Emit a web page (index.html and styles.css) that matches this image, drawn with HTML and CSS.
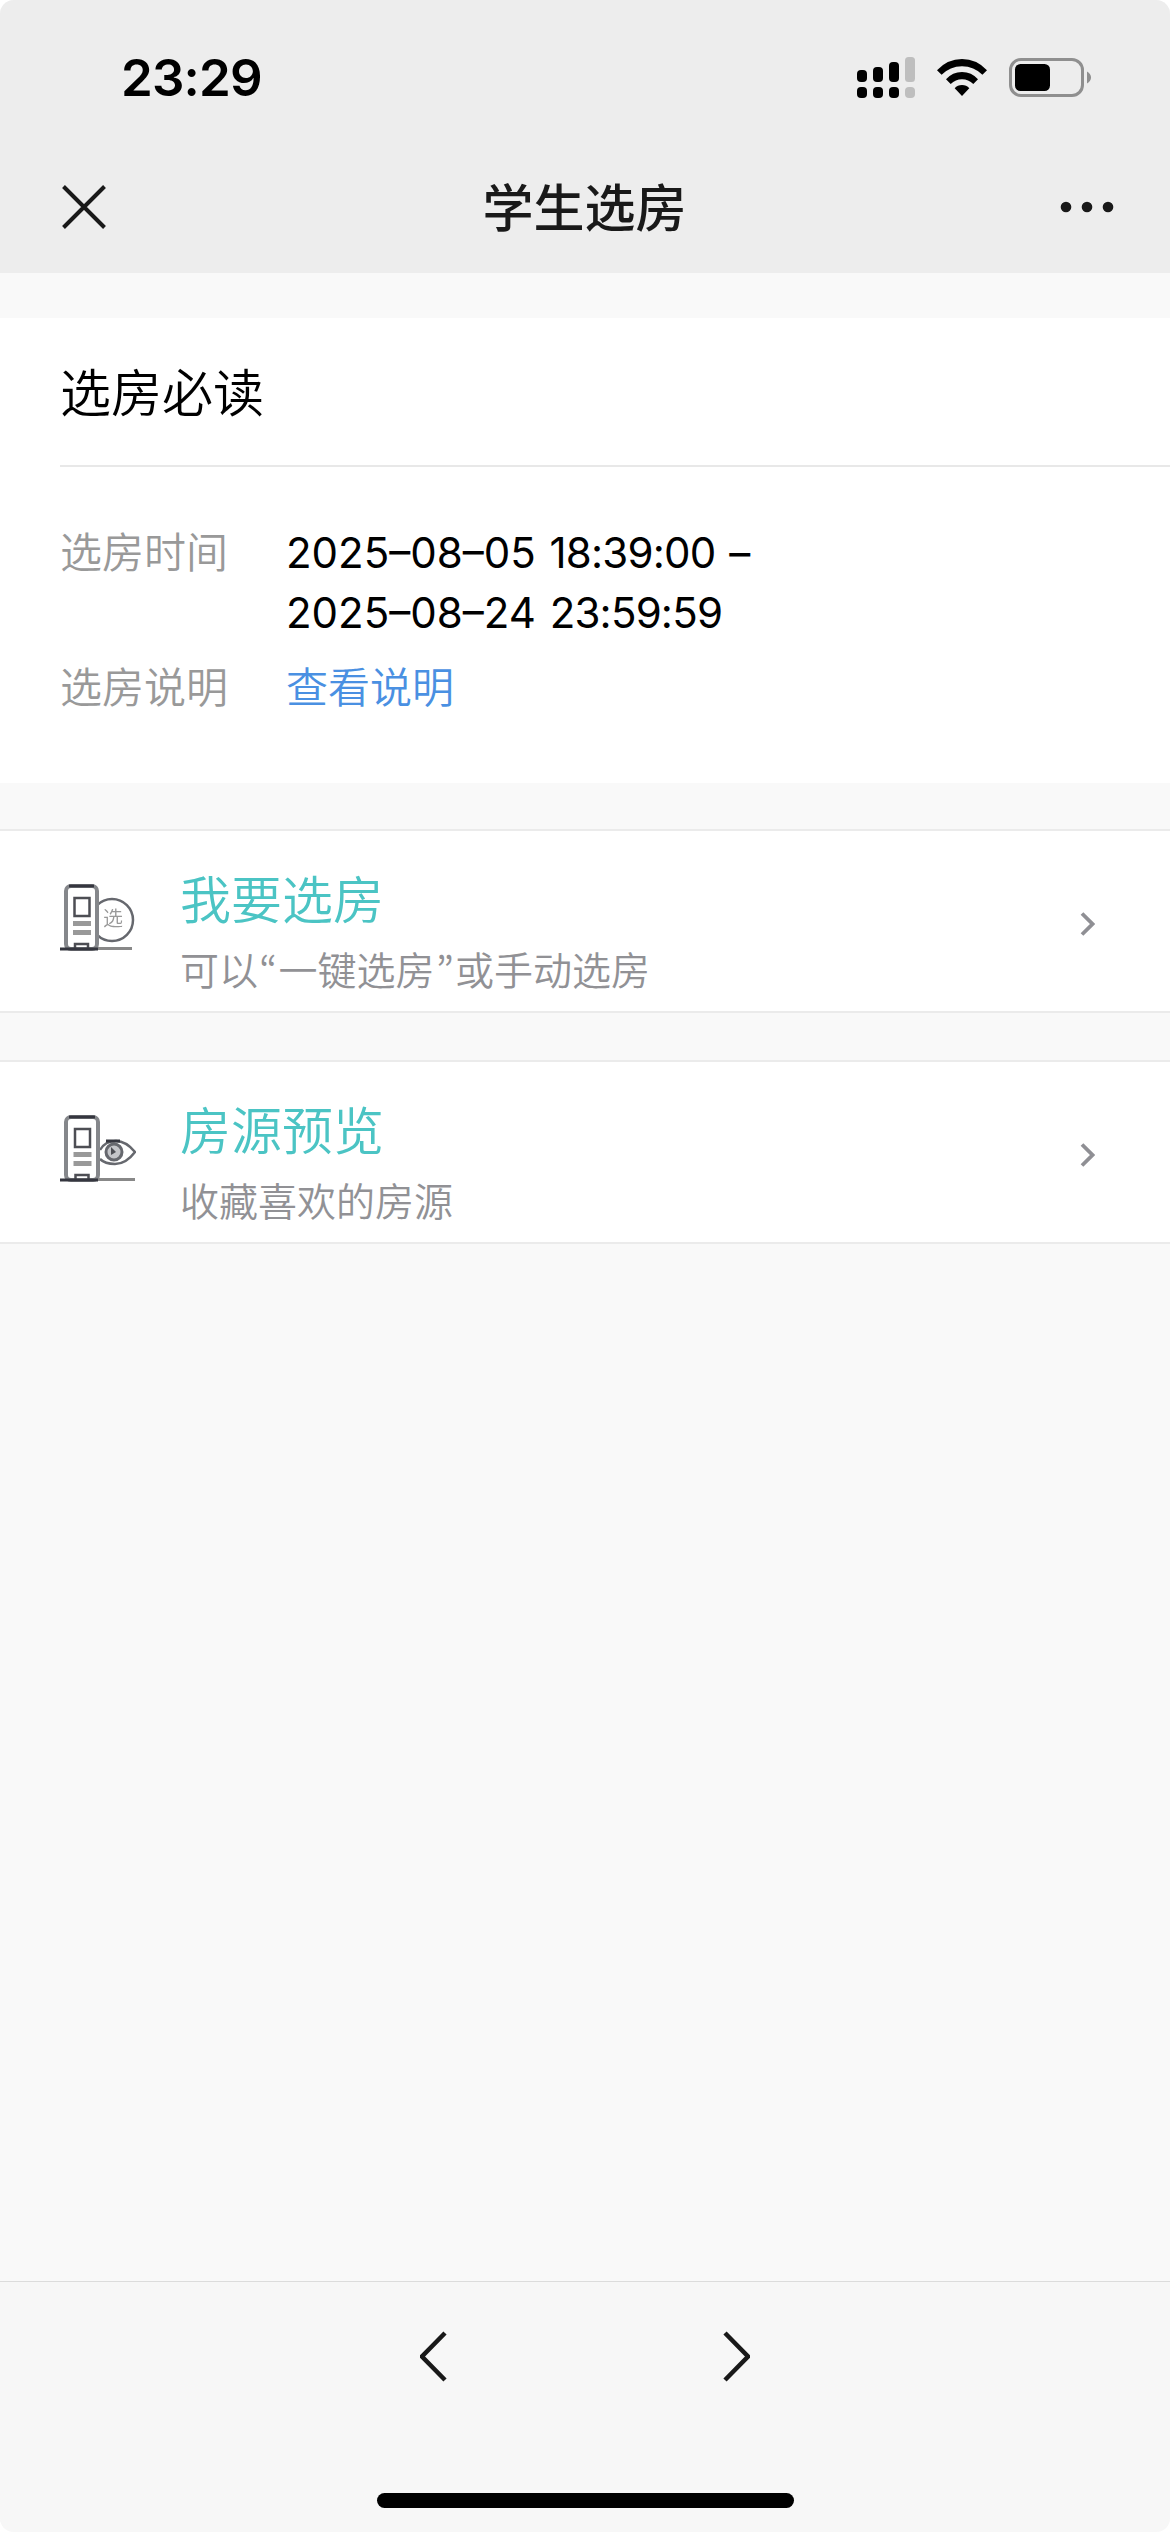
FILE: index.html
```html
<!DOCTYPE html>
<html lang="zh-CN">
<head>
<meta charset="utf-8">
<title>学生选房</title>
<link rel="stylesheet" href="styles.css">
</head>
<body>
<div class="screen">
  <header class="header">
    <div class="status">
      <span class="clock">23:29</span>
      <div class="status-icons">
        <svg class="signal" width="58" height="41" viewBox="0 0 58 41">
          <rect x="0" y="13" width="10" height="12" rx="4"/>
          <rect x="16" y="10" width="10" height="15" rx="4"/>
          <rect x="32" y="5" width="10" height="20" rx="4"/>
          <rect class="off" x="48" y="0" width="10" height="25" rx="3.5"/>
          <rect x="0" y="30" width="10" height="11" rx="4"/>
          <rect x="16" y="30" width="10" height="11" rx="4"/>
          <rect x="32" y="30" width="10" height="11" rx="4"/>
          <rect class="off" x="48" y="30" width="10" height="11" rx="4"/>
        </svg>
        <svg class="wifi" width="50" height="37" viewBox="0 0 50 37">
          <path d="M0 11.2Q10.5 0 25 0T50 11.2L45.4 15.8Q37 7.2 25 7.2T4.600 15.800Z"/>
          <path d="M9 20.300Q15.500 13 25 13T41 20.300L36.300 25Q31.500 20.200 25 20.200T13.700 25Z"/>
          <path d="M17.700 29.300Q20.500 26 25 26T32.300 29.300L25 37Z"/>
        </svg>
        <svg class="battery" width="83" height="39" viewBox="0 0 83 39">
          <rect class="case" x="1.500" y="1.500" width="72" height="36" rx="10.500"/>
          <rect x="6" y="6" width="35" height="27" rx="5.500"/>
          <path class="nub" d="M78 13.500Q82 16 82 19.500T78 25.500Z"/>
        </svg>
      </div>
    </div>
    <nav class="navbar">
      <svg class="close" width="44" height="44" viewBox="0 0 44 44"><path d="M1.500 1.500L42.500 42.500M42.500 1.500L1.500 42.500"/></svg>
      <h1 class="title">学生选房</h1>
      <svg class="more" width="54" height="12" viewBox="0 0 54 12"><circle cx="6" cy="6" r="5.300"/><circle cx="27" cy="6" r="5.300"/><circle cx="48" cy="6" r="5.300"/></svg>
    </nav>
  </header>

  <main class="content">
    <section class="notice">
      <h2 class="notice-title">选房必读</h2>
      <dl class="details">
        <dt>选房时间</dt>
        <dd class="period">2025–08–05 <span class="time">18:39:00</span> –<br>2025–08–24 <span class="time">23:59:59</span></dd>
        <dt>选房说明</dt>
        <dd><a class="link">查看说明</a></dd>
      </dl>
    </section>

    <a class="entry">
      <svg class="entry-icon" width="76" height="68" viewBox="0 0 76 68">
        <circle class="ring" cx="52" cy="36" r="21"/>
        <rect class="tower" x="6" y="2" width="31" height="63" rx="5"/>
        <path class="dark" d="M9 2H34"/>
        <rect class="window" x="14.500" y="14" width="15" height="18"/>
        <path class="bars" d="M13 39.500H31M13 48.500H31"/>
        <path class="door" d="M15 65V60H28V65"/>
        <path class="ground" d="M38 64.500H72"/>
        <path class="dark" d="M0 65H38"/>
        <text class="seal" x="43" y="42">选</text>
      </svg>
      <span class="entry-text">
        <span class="entry-name">我要选房</span>
        <span class="entry-desc">可以<span class="quote">“</span>一键选房<span class="quote">”</span>或手动选房</span>
      </span>
      <svg class="arrow" width="15" height="24" viewBox="0 0 15 24"><path d="M2 1.500L12.500 12L2 22.500"/></svg>
    </a>

    <a class="entry">
      <svg class="entry-icon" width="76" height="68" viewBox="0 0 76 68">
        <path class="eye" d="M40 35Q45 26 56 26Q66 26 75 37Q66 49 55 49Q45 49 40 44"/>
        <circle class="iris" cx="54" cy="37" r="8"/>
        <path class="pupil" d="M51 32L56 37L51 40Z"/>
        <path class="dark" d="M46 26H60"/>
        <rect class="tower" x="6" y="2" width="32" height="63" rx="5"/>
        <path class="dark" d="M9 2H35"/>
        <rect class="window" x="15" y="14" width="15" height="18"/>
        <path class="bars" d="M13.500 39.500H31.500M13.500 48.500H31.500"/>
        <path class="door" d="M15.500 65V60H28.500V65"/>
        <path class="ground" d="M38 64.500H75"/>
        <path class="dark" d="M0 65H38"/>
      </svg>
      <span class="entry-text">
        <span class="entry-name">房源预览</span>
        <span class="entry-desc">收藏喜欢的房源</span>
      </span>
      <svg class="arrow" width="15" height="24" viewBox="0 0 15 24"><path d="M2 1.500L12.500 12L2 22.500"/></svg>
    </a>
  </main>

  <footer class="toolbar">
    <div class="history">
      <svg width="27" height="51" viewBox="0 0 27 51"><path d="M25 2L2 25.500L25 49"/></svg>
      <svg width="27" height="51" viewBox="0 0 27 51"><path d="M2 2L25 25.500L2 49"/></svg>
    </div>
    <div class="home"></div>
  </footer>
</div>
</body>
</html>
```

FILE: styles.css
```css
* {
  box-sizing: border-box;
  margin: 0;
  padding: 0;
}

body {
  background: #fff;
  font-family: Inter, "Noto Sans CJK SC", sans-serif;
  font-weight: 350;
  color: #000;
}

svg {
  display: block;
  flex: none;
}

.screen {
  display: flex;
  flex-direction: column;
  width: 1170px;
  height: 2532px;
  border-radius: 14px;
  overflow: hidden;
  background: #f9f9f9;
}

.header {
  height: 273px;
  background: #ededed;
}

.status {
  display: flex;
  justify-content: space-between;
  align-items: center;
  height: 141px;
  padding: 14px 78px 0 121px;
}

.clock {
  font-size: 51px;
  font-weight: 600;
  line-height: 60px;
  letter-spacing: -0.8px;
}

.status-icons {
  display: flex;
  align-items: center;
  gap: 22px;
}

.off {
  fill: #bebebe;
}

.case {
  fill: none;
  stroke: #8f8f8f;
  stroke-width: 3;
}

.nub {
  fill: #8f8f8f;
}

.navbar {
  display: flex;
  justify-content: space-between;
  align-items: center;
  height: 132px;
  padding: 0 56px 0 62px;
}

.close path {
  stroke: #191919;
  stroke-width: 4;
}

.title {
  padding: 3px 0 0 3px;
  font-size: 51px;
  font-weight: 500;
  line-height: 60px;
  color: #191919;
}

.more {
  fill: #191919;
}

.content {
  flex: 1;
  padding-top: 45px;
}

.notice {
  height: 465px;
  margin-bottom: 46px;
  padding-left: 60px;
  background: #fff;
}

.notice-title {
  height: 149px;
  border-bottom: 2px solid #e8e8e8;
  font-size: 51px;
  font-weight: 350;
  line-height: 152px;
}

.details {
  display: grid;
  grid-template-columns: 226px 1fr;
  row-gap: 15px;
  padding-top: 56px;
  font-size: 42px;
  line-height: 60px;
}

.details dt {
  color: #999;
}

.period {
  font-weight: 400;
  word-spacing: 2px;
}

.time {
  letter-spacing: -0.8px;
}

.link {
  color: #4a90e2;
}

.entry {
  display: flex;
  align-items: center;
  height: 184px;
  margin-bottom: 47px;
  padding: 0 75px 0 60px;
  border: solid #ebebeb;
  border-width: 2px 0;
  background: #fff;
}

.entry-icon {
  width: 76px;
  height: 68px;
  margin: 0 44px 6px 0;
  fill: none;
  filter: blur(0.6px);
}

.tower {
  fill: #fff;
  stroke: #85878b;
  stroke-width: 4;
}

.dark {
  stroke: #35363f;
  stroke-width: 3;
}

.window,
.door {
  stroke: #4d4e54;
  stroke-width: 2.5;
}

.bars {
  stroke: #999;
  stroke-width: 5;
}

.ground {
  stroke: #888;
  stroke-width: 3;
}

.ring,
.eye {
  stroke: #66686e;
  stroke-width: 2.5;
}

.iris {
  fill: #c4c5c9;
  stroke: #66686e;
  stroke-width: 3;
}

.pupil {
  fill: #4d4e54;
}

.seal {
  fill: #999;
  font-size: 20px;
}

.entry-text {
  display: flex;
  flex: 1;
  flex-direction: column;
  padding-top: 23px;
}

.entry-name {
  font-size: 51px;
  line-height: 76px;
  color: #4bc4c4;
}

.entry-desc {
  font-size: 39px;
  line-height: 64px;
  color: #919195;
}

.quote {
  display: inline-block;
  width: 20.5px;
  font-family: "Noto Sans CJK KR", sans-serif;
  line-height: 1;
  text-align: center;
}

.arrow {
  margin-top: 5px;
}

.arrow path {
  fill: none;
  stroke: #8f8f94;
  stroke-width: 3.8;
}

.toolbar {
  display: flex;
  flex-direction: column;
  align-items: center;
  justify-content: space-between;
  height: 251px;
  padding: 49px 0 24px;
  border-top: 1px solid #dcdcdc;
  background: #f7f7f7;
}

.history {
  display: flex;
  gap: 276px;
}

.history path {
  fill: none;
  stroke: #191919;
  stroke-width: 4.5;
}

.home {
  width: 417px;
  height: 15px;
  border-radius: 8px;
  background: #000;
}
```
